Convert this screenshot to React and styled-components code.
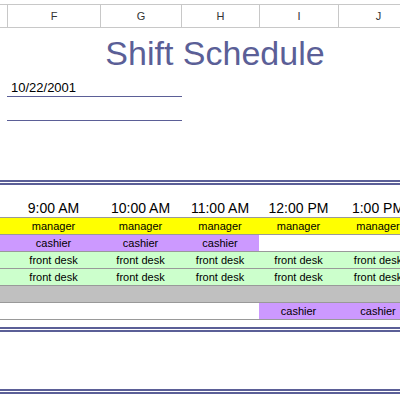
import React from "react";
import styled, { createGlobalStyle } from "styled-components";

const G = createGlobalStyle`
  body { margin: 0; background: #fff; font-family: Arial, "Liberation Sans", sans-serif; }
`;
const COLS = "7px 93px 81px 78px 79px 80px";
const Page = styled.div`width: 400px; height: 408px; overflow: hidden; position: relative;`;
const Header = styled.div`
  display: grid; grid-template-columns: ${COLS}; height: 24px; margin-top: 4px;
  border-top: 1px solid #c8c8c8; border-bottom: 1px solid #c8c8c8; box-sizing: border-box;
`;
const HCell = styled.div`
  border-left: ${p => (p.$first ? "none" : "1px solid #c8c8c8")};
  display: flex; align-items: center; justify-content: center; font-size: 11px; color: #333;
`;
const Title = styled.div`
  height: 42px; display: flex; justify-content: center; padding-left: 30px;
  font-size: 34px; color: #5b5f97; align-items: flex-end; line-height: 1;
`;
const Field = styled.div`
  margin-left: 7px; width: 175px; height: ${p => p.$h}px; border-bottom: 1px solid #5b5f97;
  font-size: 13px; padding-left: 4px; box-sizing: border-box; display: flex; align-items: flex-end; padding-bottom: 1px;
`;
const DLine = styled.div`
  border-top: 2px solid #5b5f97; border-bottom: 2px solid #5b5f97; margin-top: ${p => p.$mt}px;
  box-sizing: content-box; height: 1px;
`;
const Grid = styled.div`display: grid; grid-template-columns: ${COLS};`;
const Time = styled.div`
  height: 33px; display: flex; align-items: flex-end; justify-content: center; font-size: 14px; padding-bottom: 1px;
  border-bottom: 1px solid #999; box-sizing: border-box;
`;
const Cell = styled.div`
  height: 17px; box-sizing: border-box; border-bottom: 1px solid #999; background: ${p => p.$bg || "#fff"};
  display: flex; align-items: center; justify-content: center; font-size: 11px; color: #000;
`;

const times = ["9:00 AM", "10:00 AM", "11:00 AM", "12:00 PM", "1:00 PM"];
const C = { m: "#ffff00", c: "#cc99ff", f: "#ccffcc", g: "#c0c0c0" };
const rows = [
  [["m", "manager"], ["m", "manager"], ["m", "manager"], ["m", "manager"], ["m", "manager"]],
  [["c", "cashier"], ["c", "cashier"], ["c", "cashier"], [null, ""], [null, ""]],
  [["f", "front desk"], ["f", "front desk"], ["f", "front desk"], ["f", "front desk"], ["f", "front desk"]],
  [["f", "front desk"], ["f", "front desk"], ["f", "front desk"], ["f", "front desk"], ["f", "front desk"]],
  [["g", ""], ["g", ""], ["g", ""], ["g", ""], ["g", ""]],
  [[null, ""], [null, ""], [null, ""], ["c", "cashier"], ["c", "cashier"]],
];

export default function App() {
  return (
    <Page>
      <G />
      <Header>
        <HCell $first />
        {["F", "G", "H", "I", "J"].map(l => <HCell key={l}>{l}</HCell>)}
      </Header>
      <Title>Shift Schedule</Title>
      <Field $h={27}>10/22/2001</Field>
      <Field $h={24} />
      <DLine $mt={59} />
      <Grid>
        <Time />
        {times.map(t => <Time key={t}>{t}</Time>)}
        {rows.map((r, i) => (
          <React.Fragment key={i}>
            <Cell $bg={C[r[0][0]]} />
            {r.map(([k, t], j) => <Cell key={j} $bg={C[k]}>{t}</Cell>)}
          </React.Fragment>
        ))}
      </Grid>
      <DLine $mt={7} />
      <DLine $mt={57} />
    </Page>
  );
}
